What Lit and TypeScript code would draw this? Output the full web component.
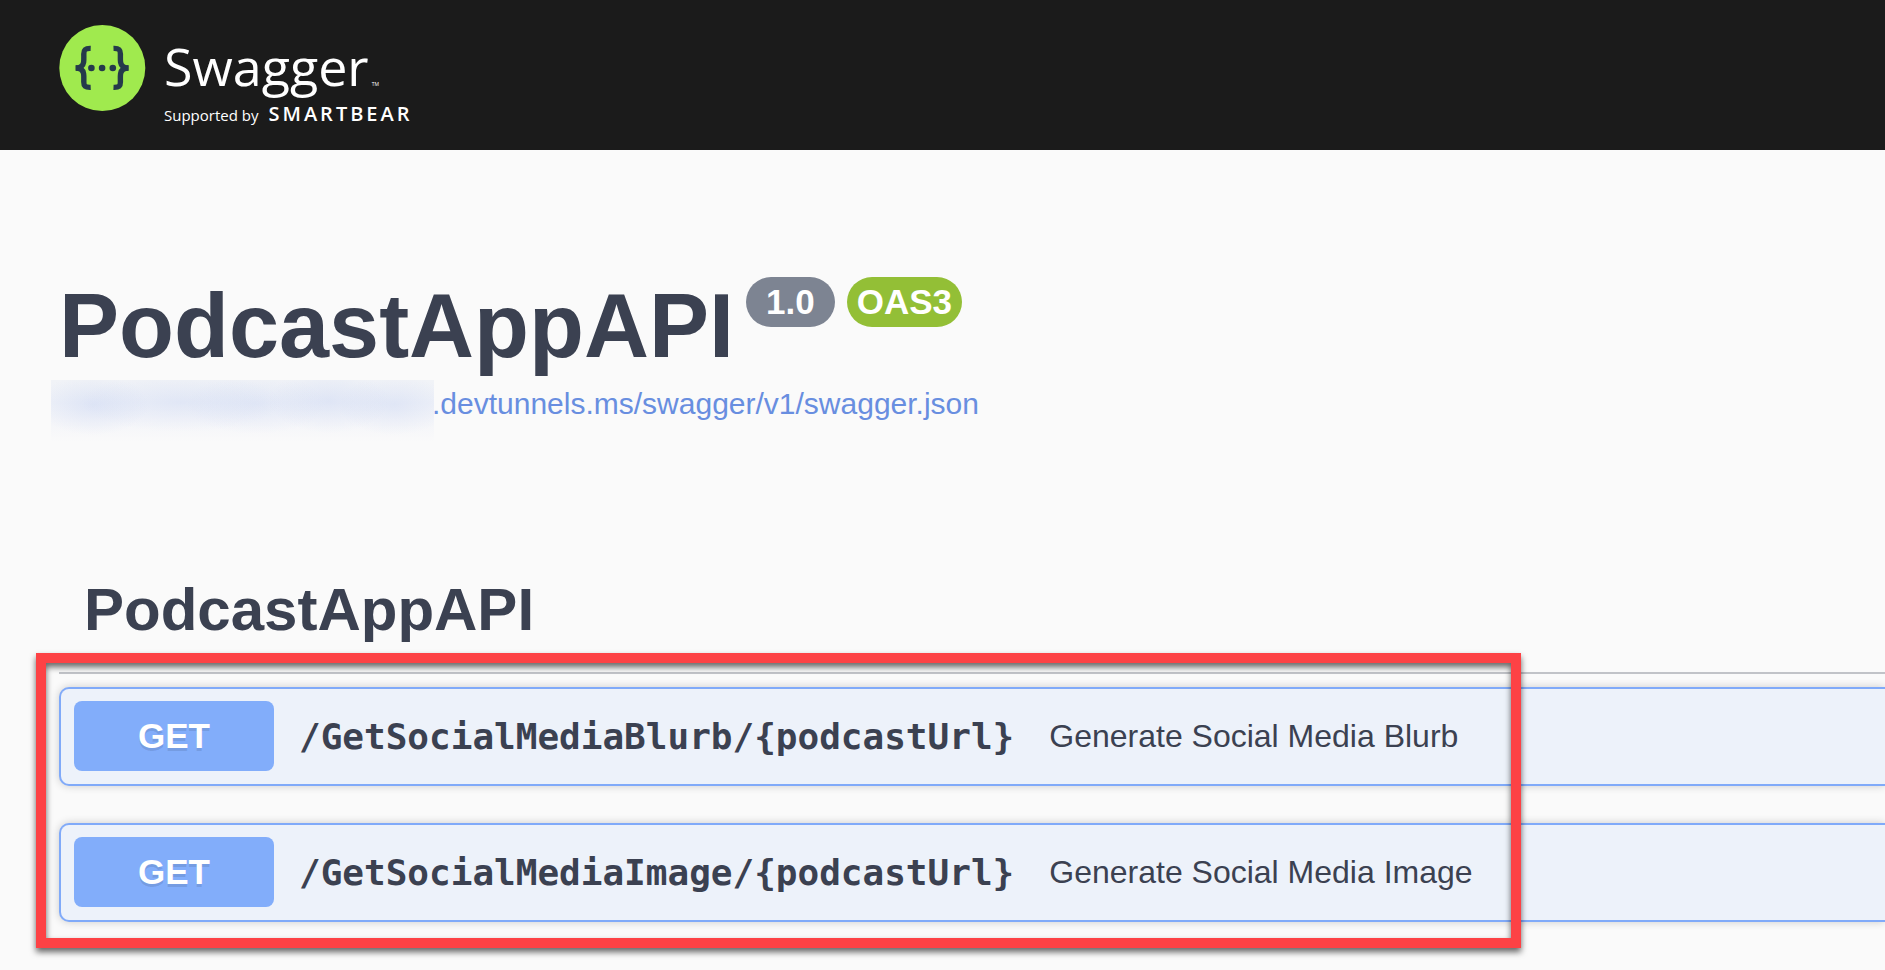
import { LitElement, html, css } from "lit";
import { customElement, property } from "lit/decorators.js";

interface Operation {
  method: string;
  path: string;
  summary: string;
}

const OPERATIONS: Operation[] = [
  { method: "GET", path: "/GetSocialMediaBlurb/{podcastUrl}", summary: "Generate Social Media Blurb" },
  { method: "GET", path: "/GetSocialMediaImage/{podcastUrl}", summary: "Generate Social Media Image" },
];

@customElement("swagger-topbar")
export class SwaggerTopbar extends LitElement {
  static styles = css`
    :host {
      display: block;
      background: #1b1b1b;
    }
    .bar {
      box-sizing: border-box;
      min-height: 150px;
      padding: 25px 59px 0;
    }
    .brand {
      display: inline-flex;
      align-items: flex-start;
      gap: 18px;
      color: #fff;
      text-decoration: none;
      font-family: "Open Sans", sans-serif;
      white-space: nowrap;
    }
    .mark {
      display: block;
      width: 87px;
      height: 87px;
    }
    .words {
      display: flex;
      flex-direction: column;
      gap: 3px;
      padding-top: 10px;
    }
    .name,
    .support {
      display: flex;
      align-items: baseline;
    }
    .name {
      gap: 3px;
      font-size: 52px;
      line-height: 62px;
    }
    .tm {
      font-size: 5px;
      line-height: 8px;
    }
    .support {
      gap: 10px;
      font-size: 15px;
      line-height: 28px;
    }
    .company {
      font-size: 20px;
      font-weight: 600;
      letter-spacing: 3px;
    }
  `;

  render() {
    return html`
      <header class="bar">
        <a class="brand" href="#" aria-label="Swagger, supported by SmartBear">
          <svg class="mark" viewBox="0 0 87 87" aria-hidden="true">
            <circle cx="43.3" cy="43" r="43" fill="#a0ea4e" />
            <g fill="none" stroke="#253a4b" stroke-width="5.4">
              <path d="M31.7 23.4 C26 23.2 24.8 25 24.8 29 C24.8 33 25 35 24.6 37.4 C24 41 22 43 16.7 43 C22 43 24 45 24.6 48.6 C25 51 24.8 53 24.8 57 C24.8 61 26 62.6 31.7 62.4" />
              <path d="M54.5 23.4 C60.2 23.2 61.4 25 61.4 29 C61.4 33 61.2 35 61.6 37.4 C62.2 41 64.2 43 69.5 43 C64.2 43 62.2 45 61.6 48.6 C61.2 51 61.4 53 61.4 57 C61.4 61 60.2 62.6 54.5 62.4" />
            </g>
            <g fill="#253a4b">
              <path d="M16.7 40.3 H20 V45.7 H16.7 Z" />
              <path d="M66.2 40.3 H69.5 V45.7 H66.2 Z" />
              <circle cx="32.4" cy="43" r="3.3" />
              <circle cx="43.1" cy="43" r="3.3" />
              <circle cx="53.8" cy="43" r="3.3" />
            </g>
          </svg>
          <span class="words">
            <span class="name">Swagger<span class="tm">TM</span></span>
            <span class="support">Supported by <span class="company">SMARTBEAR</span></span>
          </span>
        </a>
      </header>
    `;
  }
}

@customElement("operation-row")
export class OperationRow extends LitElement {
  @property() method = "";
  @property() path = "";
  @property() summary = "";

  static styles = css`
    :host {
      display: block;
    }
    .row {
      display: flex;
      align-items: center;
      box-sizing: border-box;
      width: 100%;
      margin: 0;
      padding: 12px 13px 13px;
      border: 2px solid #80aaf9;
      border-right: 0;
      border-radius: 10px 0 0 10px;
      background: #edf2fa;
      box-shadow: 0 0 8px rgba(0, 0, 0, 0.19);
      color: #3b4151;
      font-family: "Liberation Sans", Arial, sans-serif;
      text-align: left;
      white-space: nowrap;
      cursor: pointer;
    }
    .method {
      flex: none;
      width: 200px;
      border-radius: 8px;
      background: #82adfa;
      color: #fff;
      font-size: 35px;
      font-weight: 700;
      line-height: 70px;
      text-align: center;
      text-shadow: 0 3px 0 rgba(0, 0, 0, 0.1);
    }
    .path {
      padding: 0 35px 0 25px;
      font-family: "DejaVu Sans Mono", monospace;
      font-size: 36px;
      font-weight: 700;
    }
    .summary {
      font-size: 32px;
    }
  `;

  render() {
    return html`
      <button class="row" type="button" aria-expanded="false">
        <span class="method">${this.method}</span>
        <span class="path">${this.path}</span>
        <span class="summary">${this.summary}</span>
      </button>
    `;
  }
}

@customElement("app-root")
export class AppRoot extends LitElement {
  static styles = css`
    :host {
      display: block;
      min-height: 100vh;
      overflow: hidden;
      background: #fafafa;
      color: #3b4151;
      font-family: "Liberation Sans", Arial, sans-serif;
    }
    .content {
      padding: 123px 0 44px 59px;
    }
    .heading {
      display: flex;
      align-items: flex-start;
      gap: 12px;
    }
    .title {
      margin: 0;
      font-size: 90px;
      line-height: 107px;
    }
    .badge {
      margin-top: 4px;
      border-radius: 25px;
      color: #fff;
      font-size: 35px;
      font-weight: 700;
      line-height: 50px;
    }
    .version {
      padding: 0 20px;
      background: #7d8492;
    }
    .oas {
      padding: 0 10px;
      background: #93bf36;
    }
    .source {
      display: flex;
      align-items: flex-start;
      margin-left: -8px;
      color: #688ee0;
      font-size: 30px;
      line-height: 48px;
      text-decoration: none;
    }
    .redacted {
      width: 383px;
      height: 62px;
      margin-right: -2px;
      background:
        radial-gradient(ellipse 56px 30px at 42px 25px, rgba(190, 204, 240, 0.34), transparent),
        radial-gradient(ellipse 100px 30px at 130px 22px, rgba(190, 204, 240, 0.28), transparent),
        radial-gradient(ellipse 70px 30px at 205px 24px, rgba(190, 204, 240, 0.26), transparent),
        radial-gradient(ellipse 60px 32px at 278px 21px, rgba(190, 204, 240, 0.32), transparent),
        radial-gradient(ellipse 56px 30px at 343px 25px, rgba(190, 204, 240, 0.3), transparent),
        linear-gradient(#f1f3f7, #eef1f8 36%, #f4f5f9 66%, #fafafa);
    }
    .section {
      position: relative;
      margin-top: 128px;
    }
    .tag {
      margin: 0;
      padding: 0 25px 22px;
      border-bottom: 2px solid #c1c3c8;
      font-size: 60px;
      line-height: 80px;
    }
    .operations {
      display: flex;
      flex-direction: column;
      gap: 37px;
      padding-top: 13px;
    }
    .callout {
      position: absolute;
      top: 83px;
      left: -23px;
      box-sizing: border-box;
      width: 1485px;
      height: 295px;
      border: 10px solid #fd4245;
      filter: drop-shadow(0 4px 3px rgba(0, 0, 0, 0.6));
      pointer-events: none;
    }
  `;

  render() {
    return html`
      <swagger-topbar></swagger-topbar>
      <main class="content">
        <div class="heading">
          <h1 class="title">PodcastAppAPI</h1>
          <span class="badge version">1.0</span>
          <span class="badge oas">OAS3</span>
        </div>
        <a class="source" href="#">
          <span class="redacted" aria-hidden="true"></span>
          <span>.devtunnels.ms/swagger/v1/swagger.json</span>
        </a>
        <section class="section">
          <h2 class="tag">PodcastAppAPI</h2>
          <div class="operations">
            ${OPERATIONS.map(
              (op) => html`
                <operation-row .method=${op.method} .path=${op.path} .summary=${op.summary}></operation-row>
              `
            )}
          </div>
          <div class="callout"></div>
        </section>
      </main>
    `;
  }
}
